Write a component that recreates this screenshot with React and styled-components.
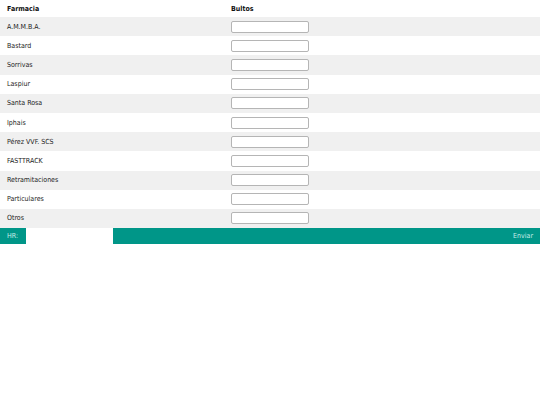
import React from "react";
import styled, { createGlobalStyle } from "styled-components";

const Global = createGlobalStyle`
  html, body { margin: 0; padding: 0; background: #fff; }
  body { font-family: "DejaVu Sans Condensed", "DejaVu Sans", Verdana, sans-serif; font-size: 7px; color: #222; }
`;

const Table = styled.div`
  width: 540px;
  display: flex;
  flex-direction: column;
`;

const HeaderRow = styled.div`
  display: grid;
  grid-template-columns: 224px 1fr;
  height: 17px;
  align-items: center;
  font-weight: bold;
  color: #111;
  background: #fff;
`;

const Row = styled.div`
  display: grid;
  grid-template-columns: 224px 1fr;
  height: 19.2px;
  align-items: center;
  background: ${(p) => (p.$odd ? "#f0f0f0" : "#fff")};
  color: #222;
`;

const Cell = styled.div`
  padding-left: 7px;
  white-space: nowrap;
`;

const Input = styled.input`
  box-sizing: border-box;
  width: 78px;
  height: 12px;
  margin: 0;
  padding: 0 3px;
  border: 1px solid #b5b5b5;
  border-radius: 2px;
  background: #fff;
  font-family: inherit;
  font-size: 7px;
  outline: none;
`;

const Footer = styled.div`
  display: flex;
  height: 16px;
`;

const FooterLabel = styled.div`
  width: 26px;
  background: #009688;
  color: #c9ece8;
  display: flex;
  align-items: center;
  padding-left: 7px;
  box-sizing: border-box;
`;

const FooterInput = styled.input`
  box-sizing: border-box;
  width: 87px;
  border: none;
  margin: 0;
  padding: 0 4px;
  background: #fff;
  outline: none;
  font-family: inherit;
  font-size: 7px;
`;

const SendButton = styled.button`
  flex: 1;
  border: none;
  margin: 0;
  background: #009688;
  color: #c9ece8;
  font-family: inherit;
  font-size: 7px;
  text-align: right;
  padding: 0 7px 0 0;
  cursor: pointer;
`;

const farmacias = [
  "A.M.M.B.A.",
  "Bastard",
  "Sorrivas",
  "Laspiur",
  "Santa Rosa",
  "Iphais",
  "Pérez VVF. SCS",
  "FASTTRACK",
  "Retramitaciones",
  "Particulares",
  "Otros",
];

export default function App() {
  return (
    <>
      <Global />
      <Table>
        <HeaderRow>
          <Cell>Farmacia</Cell>
          <Cell>Bultos</Cell>
        </HeaderRow>
        {farmacias.map((f, i) => (
          <Row key={f} $odd={i % 2 === 0}>
            <Cell>{f}</Cell>
            <Cell>
              <Input type="text" />
            </Cell>
          </Row>
        ))}
        <Footer>
          <FooterLabel>HR:</FooterLabel>
          <FooterInput type="text" />
          <SendButton>Enviar</SendButton>
        </Footer>
      </Table>
    </>
  );
}
